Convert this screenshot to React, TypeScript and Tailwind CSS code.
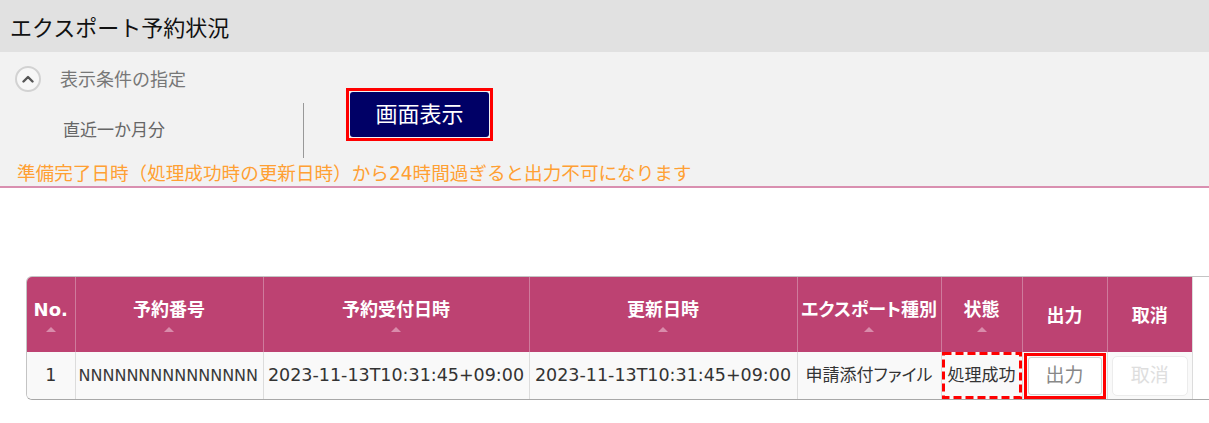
import { ReactNode } from 'react';

const FONT = '"DejaVu Sans", "Noto Sans CJK JP", sans-serif';

function SortArrow() {
  return (
    <span className="block w-0 h-0 border-x-[5px] border-x-transparent border-b-[5px] border-b-[#d98cab]" />
  );
}

function HeadCell({ children, sortable = true, last = false }: { children: ReactNode; sortable?: boolean; last?: boolean }) {
  return (
    <th
      className={`p-0 h-[75px] bg-[#bd4272] align-middle ${last ? '' : 'border-r border-[#cf7b9c]'}`}
    >
      <div className="flex flex-col items-center justify-center gap-[6px] pt-[2px]">
        <span className="text-[18px] font-bold text-white leading-[22px] whitespace-nowrap [font-feature-settings:'palt']">
          {children}
        </span>
        {sortable && <SortArrow />}
      </div>
    </th>
  );
}

function BodyCell({ children, className = '', last = false }: { children: ReactNode; className?: string; last?: boolean }) {
  return (
    <td className={`p-0 h-[47px] bg-[#f9f9f9] align-middle ${last ? '' : 'border-r border-[#dcdcdc]'} ${className}`}>
      {children}
    </td>
  );
}

export default function App() {
  return (
    <div className="w-full min-h-screen overflow-hidden bg-white" style={{ fontFamily: FONT }}>
      {/* title */}
      <div className="h-[52px] bg-[#e1e1e1] flex items-center pl-[10px]">
        <h1 className="text-[22px] text-[#111] leading-none pt-[6px]">エクスポート予約状況</h1>
      </div>

      {/* conditions panel */}
      <div className="bg-[#f2f2f2] border-b-2 border-[#d98fb0]">
        <div className="h-[51px] flex items-center pl-[15px] pt-[3px]">
          <span className="w-[26px] h-[26px] rounded-full border-2 border-[#d2d2d2] bg-[#f7f7f7] flex items-center justify-center">
            <svg width="12" height="8" viewBox="0 0 12 8" fill="none">
              <path d="M1.5 6.5 L6 2 L10.5 6.5" stroke="#555" strokeWidth="2.4" strokeLinecap="round" strokeLinejoin="round" />
            </svg>
          </span>
          <span className="ml-[19px] text-[18px] text-[#777]">表示条件の指定</span>
        </div>

        <div className="h-[55px] flex">
          <div className="w-[303px] pl-[63px] flex items-center text-[17px] text-[#666]">直近一か月分</div>
          <div className="w-px bg-[#999]" />
          <div className="ml-[42px] -mt-[15px] self-start">
            <div className="border-[3px] border-[#ff0000] w-[147px] h-[53px] flex">
              <button className="flex-1 m-[1px] rounded-[3px] bg-[#000066] text-white text-[22px] leading-none">
                画面表示
              </button>
            </div>
          </div>
        </div>

        <div className="h-[28px] pl-[17px] pt-[3px] flex items-center text-[18.6px] text-[#ffa033] whitespace-nowrap">
          準備完了日時（処理成功時の更新日時）から24時間過ぎると出力不可になります
        </div>
      </div>

      {/* reservations table */}
      <div className="pt-[88px] pl-[26px]">
        <div className="flex w-[1200px] border border-[#c4c4c4] border-b-[#a8a8a8] rounded-[6px] overflow-hidden">
          <table className="table-fixed border-collapse w-[1165px]">
            <colgroup>
              <col className="w-[48px]" />
              <col className="w-[188px]" />
              <col className="w-[266px]" />
              <col className="w-[268px]" />
              <col className="w-[144px]" />
              <col className="w-[81px]" />
              <col className="w-[85px]" />
              <col className="w-[85px]" />
            </colgroup>
            <thead>
              <tr>
                <HeadCell>No.</HeadCell>
                <HeadCell>予約番号</HeadCell>
                <HeadCell>予約受付日時</HeadCell>
                <HeadCell>更新日時</HeadCell>
                <HeadCell>エクスポート種別</HeadCell>
                <HeadCell>状態</HeadCell>
                <HeadCell sortable={false}>出力</HeadCell>
                <HeadCell sortable={false} last>取消</HeadCell>
              </tr>
            </thead>
            <tbody className="text-[#333]">
              <tr>
                <BodyCell className="text-center text-[17.5px]">1</BodyCell>
                <BodyCell>
                  <div className="overflow-hidden whitespace-nowrap pl-[3px] text-[16px] text-[#3a3a3a]">
                    NNNNNNNNNNNNNNN
                  </div>
                </BodyCell>
                <BodyCell className="text-center text-[17.5px] whitespace-nowrap">2023-11-13T10:31:45+09:00</BodyCell>
                <BodyCell className="text-center text-[17.5px] whitespace-nowrap">2023-11-13T10:31:45+09:00</BodyCell>
                <BodyCell className="text-center text-[17px] whitespace-nowrap [font-feature-settings:'palt']">
                  申請添付ファイル
                </BodyCell>
                <BodyCell>
                  <div className="relative h-[47px] flex items-center justify-center text-[17px] whitespace-nowrap">
                    <svg className="absolute inset-0" width="80" height="47" viewBox="0 0 80 47" fill="none">
                      <rect x="1.5" y="1.5" width="77" height="44" stroke="#ff0000" strokeWidth="3" strokeDasharray="8 4" />
                    </svg>
                    処理成功
                  </div>
                </BodyCell>
                <BodyCell>
                  <div className="flex items-center justify-center h-[47px]">
                    <div className="w-[82px] h-[46px] border-[3px] border-[#ff0000] flex">
                      <button className="flex-1 m-[1px] rounded-[3px] bg-white border border-[#d0d0d0] text-[19px] text-[#888]">
                        出力
                      </button>
                    </div>
                  </div>
                </BodyCell>
                <BodyCell last>
                  <div className="flex items-center justify-center h-[47px]">
                    <button disabled className="w-[76px] h-[40px] rounded-[5px] bg-white border border-[#ececec] text-[19px] text-[#dedede]">
                      取消
                    </button>
                  </div>
                </BodyCell>
              </tr>
            </tbody>
          </table>
          <div className="flex-1 border-l border-[#dcdcdc] bg-white" />
        </div>
      </div>
    </div>
  );
}
